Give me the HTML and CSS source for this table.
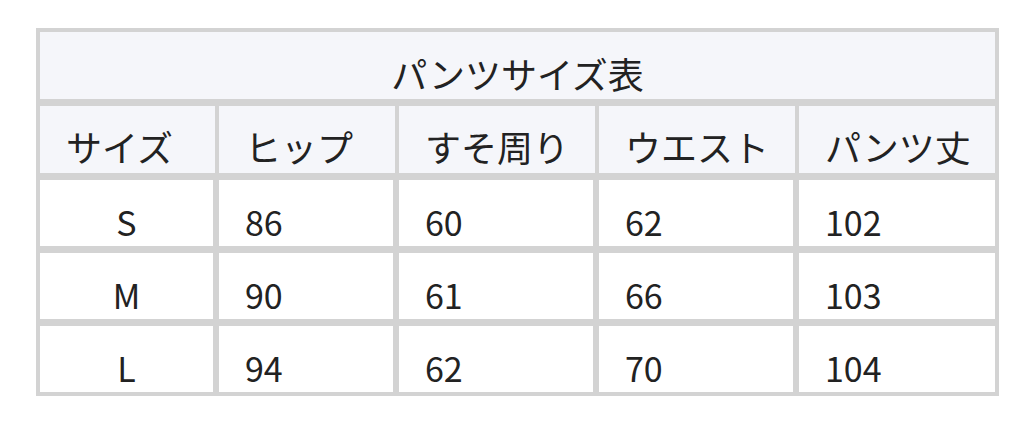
FILE: index.html
```html
<!DOCTYPE html>
<html lang="ja">
<head>
<meta charset="utf-8">
<title>パンツサイズ表</title>
<link rel="stylesheet" href="styles.css">
</head>
<body>
<table class="size-table">
  <colgroup>
    <col class="c1"><col class="c2"><col class="c3"><col class="c4"><col class="c5">
  </colgroup>
  <tr class="title-row">
    <th colspan="5" class="title">パンツサイズ表</th>
  </tr>
  <tr class="head-row">
    <th>サイズ</th>
    <th>ヒップ</th>
    <th>すそ周り</th>
    <th>ウエスト</th>
    <th class="last">パンツ丈</th>
  </tr>
  <tr class="body-row">
    <td class="size">S</td><td>86</td><td>60</td><td>62</td><td class="last">102</td>
  </tr>
  <tr class="body-row">
    <td class="size">M</td><td>90</td><td>61</td><td>66</td><td class="last">103</td>
  </tr>
  <tr class="body-row final">
    <td class="size">L</td><td>94</td><td>62</td><td>70</td><td class="last">104</td>
  </tr>
</table>
</body>
</html>
```
FILE: styles.css
```css
html, body {
  margin: 0;
  padding: 0;
  background: #ffffff;
}
body {
  padding: 28px 0 0 36px;
  font-family: "Noto Sans CJK JP", "Noto Sans", sans-serif;
  color: #222222;
}
.size-table {
  border-collapse: separate;
  border-spacing: 0;
  table-layout: fixed;
  width: 963px;
  border: 4px solid #d3d3d3;
  font-size: 34px;
  line-height: normal;
}
.c1 { width: 179px; }
.c2 { width: 180px; }
.c3 { width: 200px; }
.c4 { width: 200px; }
.c5 { width: 196px; }

th, td {
  padding: 0 0 0 26px;
  font-weight: normal;
  text-align: left;
  vertical-align: bottom;
  white-space: nowrap;
  border: 0 solid #d3d3d3;
}
.title-row, .head-row { height: 74px; }
.body-row { height: 73px; }
.body-row.final { height: 66px; }

th {
  background: #f5f6fa;
  border-bottom-width: 7px;
  font-size: 36px;
  padding-bottom: 1px;
}
.title {
  text-align: center;
  padding: 0;
}
.head-row th { border-right-width: 4px; }
.head-row th.last { border-right-width: 0; }

td {
  background: #ffffff;
  border-right-width: 6px;
  border-bottom-width: 7px;
}
td.last { border-right-width: 0; }
.final td { border-bottom-width: 0; }
td.size {
  text-align: center;
  padding: 0;
}
```
